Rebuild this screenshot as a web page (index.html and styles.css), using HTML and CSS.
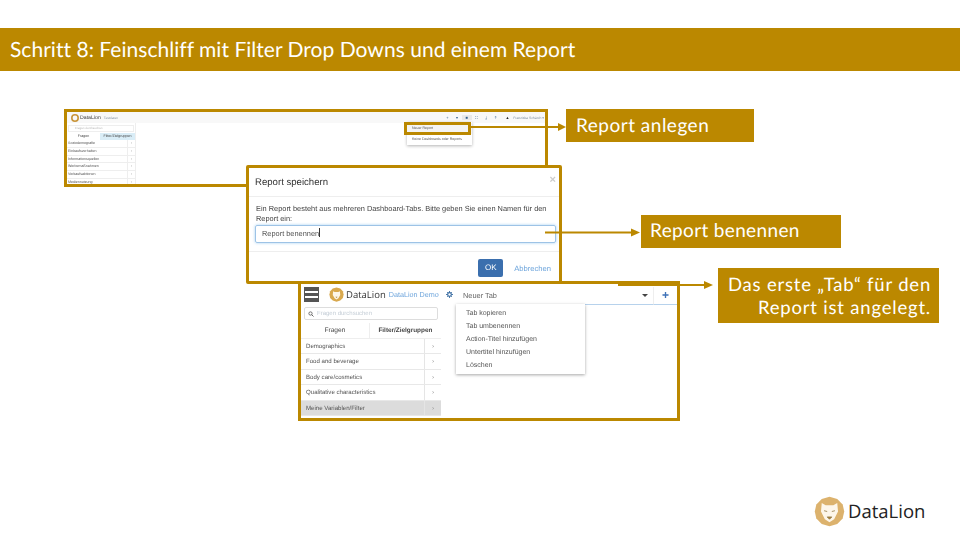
FILE: index.html
```html
<!DOCTYPE html>
<html lang="de">
<head>
<meta charset="utf-8">
<title>Schritt 8</title>
<link rel="stylesheet" href="styles.css">
</head>
<body>
<div class="slide">
  <header class="title-bar">Schritt 8: Feinschliff mit Filter Drop Downs und einem Report</header>

  <section class="shot shot-one">
    <div class="mini-top">
      <div class="mini-brand">
        <svg class="mini-logo" viewBox="0 0 20 20"><circle cx="10" cy="10" r="8" fill="none" stroke="#c9953a" stroke-width="4"/></svg>
        <span class="mini-name">DataLion</span><span class="mini-sub">Testdaten</span>
      </div>
      <div class="mini-tools">
        <span class="tool">+</span><span class="tool">▾</span><span class="tool tool-on">■</span><span class="tool">⛶</span><span class="tool">⤓</span><span class="tool">⤒</span>
        <span class="tool tool-user">▲</span><span class="mini-user">Franziska Schärch ▾</span>
      </div>
    </div>
    <aside class="mini-side">
      <div class="mini-search">Fragen durchsuchen</div>
      <div class="mini-tabs"><span class="mini-tab">Fragen</span><span class="mini-tab mini-tab-on">Filter/Zielgruppen</span></div>
      <div class="mini-row"><span>Soziodemografie</span><i>›</i></div>
      <div class="mini-row"><span>Einkaufsverhalten</span><i>›</i></div>
      <div class="mini-row"><span>Informationsquellen</span><i>›</i></div>
      <div class="mini-row"><span>Werbemaßnahmen</span><i>›</i></div>
      <div class="mini-row"><span>Verkaufsaktionen</span><i>›</i></div>
      <div class="mini-row"><span>Mediennutzung</span><i>›</i></div>
    </aside>
    <div class="mini-menu">
      <div class="mini-item mini-item-hi">Neuer Report</div>
      <div class="mini-item">Keine Dashboards oder Reports</div>
    </div>
  </section>

  <section class="shot shot-two">
    <div class="dlg-head"><span class="dlg-title">Report speichern</span><span class="dlg-close">×</span></div>
    <div class="dlg-body">
      <p class="dlg-text">Ein Report besteht aus mehreren Dashboard-Tabs. Bitte geben Sie einen Namen für den Report ein:</p>
      <div class="dlg-input">Report benennen<span class="caret"></span></div>
    </div>
    <div class="dlg-foot"><span class="btn-ok">OK</span><span class="btn-cancel">Abbrechen</span></div>
  </section>

  <section class="shot shot-three">
    <div class="app-top">
      <div class="burger"><span></span><span></span><span></span></div>
      <svg class="lion" viewBox="0 0 40 40"><polygon points="20,1 30,4 37,11 39,20 37,29 30,36 20,39 10,36 3,29 1,20 3,11 10,4" fill="#d9a94f"/><path d="M11 11 15 13 25 13 29 11 30 21 25 30 20 33 15 30 10 21Z" fill="#fdf6ea"/><path d="M17 26h6l-3 3Z" fill="#a9843f"/></svg>
      <span class="app-name">DataLion</span>
      <span class="app-demo">DataLion Demo</span>
      <svg class="gear" viewBox="0 0 12 12"><circle cx="6" cy="6" r="3.2" fill="none" stroke="#33689f" stroke-width="2"/><path d="M6 0v2M6 10v2M0 6h2M10 6h2M1.8 1.8l1.4 1.4M8.8 8.8l1.4 1.4M1.8 10.2l1.4-1.4M8.8 3.2l1.4-1.4" stroke="#33689f" stroke-width="1.5"/></svg>
      <div class="tab-select"><span>Neuer Tab</span><i class="tab-arrow"></i></div>
      <div class="tab-plus">+</div>
    </div>
    <aside class="app-side">
      <div class="app-search">
        <svg class="search-ico" viewBox="0 0 12 12"><circle cx="5" cy="5" r="3.3" fill="none" stroke="#555" stroke-width="1.6"/><path d="M7.5 7.5 11 11" stroke="#555" stroke-width="1.8"/></svg>
        <span>Fragen durchsuchen</span>
      </div>
      <div class="app-tabs"><span class="app-tab">Fragen</span><span class="app-tab app-tab-bold">Filter/Zielgruppen</span></div>
      <div class="app-row"><span>Demographics</span><i>›</i></div>
      <div class="app-row"><span>Food and beverage</span><i>›</i></div>
      <div class="app-row"><span>Body care/cosmetics</span><i>›</i></div>
      <div class="app-row"><span>Qualitative characteristics</span><i>›</i></div>
      <div class="app-row app-row-on"><span>Meine Variablen/Filter</span><i>›</i></div>
    </aside>
    <div class="tab-menu">
      <div class="tab-item">Tab kopieren</div>
      <div class="tab-item">Tab umbenennen</div>
      <div class="tab-item">Action-Titel hinzufügen</div>
      <div class="tab-item">Untertitel hinzufügen</div>
      <div class="tab-item">Löschen</div>
    </div>
  </section>

  <div class="neu-box"></div>
  <svg class="arrows" viewBox="0 0 960 540">
    <g fill="none" stroke="#bb8800" stroke-width="2">
      <path d="M470 127H560"/>
      <path d="M545 232.500H633"/>
      <path d="M618 285H706"/>
    </g>
    <g fill="#bb8800">
      <path d="M558 123l8 4-8 4Z"/>
      <path d="M631 228.500l9 4-9 4Z"/>
      <path d="M704 281l9 4-9 4Z"/>
    </g>
  </svg>

  <div class="note note-one">Report anlegen</div>
  <div class="note note-two">Report benennen</div>
  <div class="note note-three">Das erste „Tab“ für den<br>Report ist angelegt.</div>

  <div class="brand">
    <svg class="brand-logo" viewBox="0 0 40 40"><polygon points="20,1 30,4 37,11 39,20 37,29 30,36 20,39 10,36 3,29 1,20 3,11 10,4" fill="#dcb26d"/><path d="M10 9 15 12 25 12 30 9 31 20 26 30 20 34 14 30 9 20Z" fill="#fdf6ea"/><path d="M13 19l4 1M27 19l-4 1M17 27h6l-3 3Z" stroke="#8f7440" fill="#a9843f"/></svg>
    <span class="brand-name">DataLion</span>
  </div>
</div>
</body>
</html>
```
FILE: styles.css
```css
* { box-sizing: border-box; }
html, body { margin: 0; padding: 0; }
body { background: #fff; font-family: "Liberation Sans", Arial, sans-serif; text-rendering: geometricPrecision; }
.slide { position: relative; width: 960px; height: 540px; overflow: hidden; background: #fff; padding-top: 28px; }

.title-bar { height: 43px; background: #bb8800; color: #fff; font-family: Lato, sans-serif; font-size: 21px; line-height: 44px; padding-left: 10px; letter-spacing: 0.03px; }

.shot { position: absolute; background: #fff; border: 3px solid #bb8800; overflow: hidden; }
.shot > * { filter: blur(0.3px); }
.shot-one { left: 64px; top: 109px; width: 484px; height: 78px; }
.shot-two { left: 246px; top: 165px; width: 316px; height: 119px; border-radius: 2px; }
.shot-three { left: 298px; top: 281px; width: 382px; height: 140px; }

.mini-top { height: 11px; background: #f8f8f8; display: flex; justify-content: space-between; align-items: center; padding: 0 1px 0 4px; }
.mini-brand { display: flex; align-items: center; gap: 1px; }
.mini-logo { width: 8px; height: 8px; }
.mini-name { font-size: 5.2px; color: #444; margin-right: 2px; }
.mini-sub { font-size: 3.3px; color: #8a99a8; }
.mini-tools { display: flex; align-items: center; font-size: 4px; color: #2e5d8c; }
.tool { width: 9.7px; text-align: center; }
.tool-on { background: #e9e9e9; }
.tool-user { color: #222; margin-left: 2px; }
.mini-user { font-size: 3.4px; color: #7e8fa0; margin-left: 1px; white-space: nowrap; }
.mini-side { width: 69px; height: 61px; border-right: 1px solid #eee; overflow: hidden; }
.mini-search { height: 7px; margin: 2px 1px 1px 1px; border: 1px solid #eee; font-size: 3px; line-height: 5px; color: #b5b5b5; padding-left: 6px; }
.mini-tabs { display: flex; height: 7px; font-size: 3.6px; line-height: 7px; text-align: center; color: #444; }
.mini-tab { width: 33px; }
.mini-tab-on { width: 35px; background: #d9edf7; white-space: nowrap; }
.mini-row { display: flex; justify-content: space-between; height: 7.8px; font-size: 3.6px; line-height: 6.8px; padding-left: 1px; border-bottom: 1px solid #eee; color: #555; }
.mini-row i { width: 8px; text-align: center; font-style: normal; color: #999; border-left: 1px solid #eee; }
.mini-menu { position: absolute; left: 340px; top: 10px; width: 65px; height: 23px; background: #fff; box-shadow: 0 1px 3px rgba(0,0,0,.3); padding-top: 1px; }
.mini-item { font-size: 3.5px; line-height: 11px; height: 11px; color: #555; padding-left: 5px; white-space: nowrap; }
.mini-item-hi { background: #f4f4f4; }

.neu-box { position: absolute; left: 404px; top: 122px; width: 67px; height: 13px; border: 3px solid #bb8800; }
.arrows { position: absolute; left: 0; top: 0; width: 960px; height: 540px; }

.dlg-head { height: 29px; border-bottom: 1px solid #eee; display: flex; justify-content: space-between; align-items: center; padding: 0 3px 0 6px; }
.dlg-title { font-size: 9.6px; color: #333; }
.dlg-close { font-size: 11px; font-weight: bold; color: #ccc; margin-top: -5px; }
.dlg-body { height: 55px; border-bottom: 1px solid #eee; padding: 7px 3px 0 7px; }
.dlg-text { margin: 0; font-size: 7.4px; line-height: 10px; color: #444; width: 300px; }
.dlg-input { height: 18px; width: 301px; margin-left: -1px; margin-top: 1px; border: 1px solid #9dc3e6; border-radius: 2px; box-shadow: 0 0 3px rgba(102,175,233,.6); font-size: 7.4px; line-height: 16px; color: #555; padding-left: 6px; }
.caret { display: inline-block; width: 1px; height: 9px; background: #333; vertical-align: -1px; }
.dlg-foot { display: flex; justify-content: flex-end; align-items: center; gap: 11px; padding: 7px 8px 0 0; }
.btn-ok { width: 25px; height: 18px; background: #3b6fae; border-radius: 2px; color: #fff; font-size: 8px; line-height: 18px; text-align: center; }
.btn-cancel { font-size: 7.6px; color: #6ea5dc; }

.app-top { display: flex; align-items: center; height: 21px; position: relative; }
.burger { width: 15px; height: 15px; margin-left: 3px; background: #fff; border: 1px solid #555; display: flex; flex-direction: column; justify-content: space-between; flex: none; }
.burger span { height: 3px; background: #555; }
.lion { width: 15px; height: 15px; margin-left: 10px; flex: none; }
.app-name { font-family: "Open Sans", sans-serif; font-size: 9.5px; color: #333; margin-left: 2px; }
.app-demo { font-size: 7.2px; color: #6ea5dc; margin-left: 3px; white-space: nowrap; }
.gear { width: 7px; height: 7px; margin-left: 7px; flex: none; }
.tab-select { position: absolute; left: 155px; top: 3px; width: 197px; height: 18px; border-bottom: 1px solid #b7d2ec; display: flex; align-items: center; justify-content: space-between; padding: 0 5px 0 7px; font-size: 7.4px; color: #666; }
.tab-arrow { width: 0; height: 0; border-left: 3px solid transparent; border-right: 3px solid transparent; border-top: 3px solid #444; }
.tab-plus { position: absolute; left: 352px; top: 3px; width: 24px; height: 18px; border-bottom: 1px solid #b7d2ec; border-left: 1px solid #eee; text-align: center; font-size: 12px; font-weight: bold; color: #3f72b8; line-height: 16px; }
.app-side { width: 140px; padding-top: 2px; }
.app-search { height: 13px; margin: 0 3px; border: 1px solid #ddd; border-radius: 2px; display: flex; align-items: center; gap: 3px; padding-left: 3px; font-size: 6px; color: #c4cdd6; }
.search-ico { width: 6px; height: 6px; flex: none; }
.app-tabs { display: flex; height: 16px; font-size: 6.6px; line-height: 16px; text-align: center; color: #444; border-bottom: 1px solid #eee; margin-top: 2.5px; }
.app-tab { flex: 1; }
.app-tab-bold { font-weight: bold; font-size: 6.4px; flex: 1.05; border-left: 1px solid #eee; white-space: nowrap; }
.app-row { display: flex; justify-content: space-between; height: 15.6px; font-size: 6.1px; line-height: 15px; padding: 0 0 0 5px; border-bottom: 1px solid #e8e8e8; color: #555; }
.app-row i { width: 17px; text-align: center; font-style: normal; color: #888; border-left: 1px solid #e5e5e5; }
.app-row-on { background: #dcdcdc; }
.tab-menu { position: absolute; left: 155px; top: 20px; width: 129px; height: 70px; background: #fff; box-shadow: 0 1px 3px rgba(0,0,0,.35); padding-top: 3px; }
.tab-item { font-size: 7px; line-height: 13px; color: #555; padding-left: 10px; }

.note { position: absolute; background: #bb8800; color: #fff; font-family: Lato, sans-serif; font-size: 19px; letter-spacing: 0.6px; }
.note-one { left: 566px; top: 109px; width: 188px; height: 33px; line-height: 33px; padding-left: 10px; letter-spacing: 0.5px; }
.note-two { left: 641px; top: 215px; width: 200px; height: 33px; line-height: 32px; padding-left: 9px; letter-spacing: 0.35px; }
.note-three { left: 718px; top: 268px; width: 221px; height: 55px; line-height: 23px; padding: 5px 8px 0 0; text-align: right; font-size: 18.5px; letter-spacing: 0.8px; }

.brand { position: absolute; left: 814px; top: 496px; display: flex; align-items: center; gap: 3px; }
.brand-logo { width: 31px; height: 31px; }
.brand-name { font-family: "Open Sans", sans-serif; font-size: 18.5px; color: #222; }
```
